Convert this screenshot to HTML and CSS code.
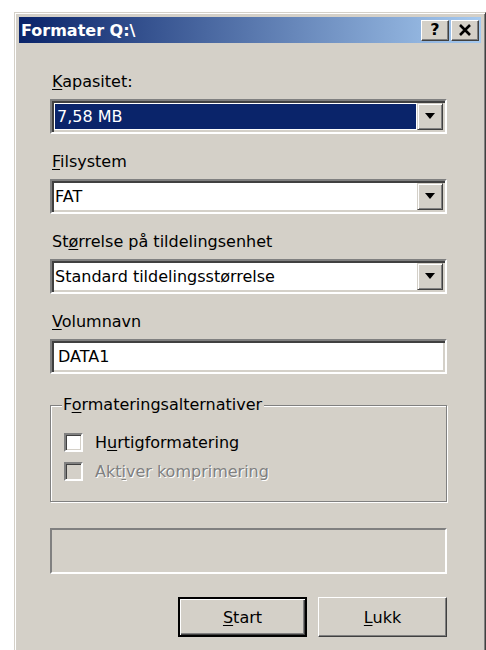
FILE: index.html
```html
<!DOCTYPE html>
<html lang="no">
<head>
<meta charset="utf-8">
<title>Formater Q:\</title>
<link rel="stylesheet" href="styles.css">
</head>
<body>
<div class="window">
  <div class="titlebar">
    <span class="title">Formater Q:\</span>
    <div class="title-buttons">
      <div class="tbtn help">?</div>
      <div class="tbtn close">
        <svg width="14" height="12" viewBox="0 0 14 12"><path d="M2 1 L12 11 M12 1 L2 11" stroke="#000" stroke-width="2.6" fill="none"/></svg>
      </div>
    </div>
  </div>

  <div class="content">
    <label class="label"><u>K</u>apasitet:</label>
    <div class="field combo">
      <div class="combo-value"><span class="selected">7,58 MB</span></div>
      <div class="combo-btn"><svg width="12" height="7" viewBox="0 0 12 7"><path d="M1 0 H11 L6 6 Z" fill="#000"/></svg></div>
    </div>

    <label class="label"><u>F</u>ilsystem</label>
    <div class="field combo">
      <div class="combo-value"><span class="plain">FAT</span></div>
      <div class="combo-btn"><svg width="12" height="7" viewBox="0 0 12 7"><path d="M1 0 H11 L6 6 Z" fill="#000"/></svg></div>
    </div>

    <label class="label">St<u>ø</u>rrelse på tildelingsenhet</label>
    <div class="field combo">
      <div class="combo-value"><span class="plain">Standard tildelingsstørrelse</span></div>
      <div class="combo-btn"><svg width="12" height="7" viewBox="0 0 12 7"><path d="M1 0 H11 L6 6 Z" fill="#000"/></svg></div>
    </div>

    <label class="label"><u>V</u>olumnavn</label>
    <div class="field textbox">DATA1</div>

    <fieldset class="group">
      <legend>F<u>o</u>rmateringsalternativer</legend>
      <div class="check-row">
        <span class="checkbox"></span>
        <span>H<u>u</u>rtigformatering</span>
      </div>
      <div class="check-row disabled">
        <span class="checkbox"></span>
        <span>Akt<u>i</u>ver komprimering</span>
      </div>
    </fieldset>

    <div class="progress"></div>

    <div class="buttons">
      <div class="button default"><span><u>S</u>tart</span></div>
      <div class="button"><span><u>L</u>ukk</span></div>
    </div>
  </div>
</div>
</body>
</html>
```

FILE: styles.css
```css
html, body {
  margin: 0;
  background: #fff;
}

body {
  font-family: "DejaVu Sans", Tahoma, sans-serif;
  font-size: 16px;
  color: #000;
  overflow: hidden;
}

u {
  text-decoration: underline;
  text-underline-offset: 2px;
  text-decoration-thickness: 1px;
}

/* dialog frame */
.window {
  margin: 12px 0 0 14px;
  width: 472px;
  height: 660px;
  box-sizing: border-box;
  background: #d4d0c8;
  border: 1px solid;
  border-color: #d4d0c8 #404040 #404040 #d4d0c8;
  box-shadow: inset 1px 1px #fff, inset -1px -1px #808080;
  padding: 4px;
}

.titlebar {
  height: 26px;
  display: flex;
  align-items: center;
  padding-left: 2px;
  background: linear-gradient(to right, #0a246a, #a6caf0);
}

.title {
  flex: 1;
  color: #fff;
  font-weight: bold;
  font-size: 16px;
  white-space: nowrap;
}

.title-buttons {
  display: flex;
  gap: 2px;
  margin-right: 2px;
}

.tbtn {
  width: 28px;
  height: 21px;
  box-sizing: border-box;
  display: flex;
  align-items: center;
  justify-content: center;
  background: #d4d0c8;
  border: 1px solid;
  border-color: #fff #404040 #404040 #fff;
  box-shadow: inset -1px -1px #808080;
}

.tbtn.help {
  font-weight: bold;
  font-size: 16px;
  line-height: 1;
}

/* dialog body */
.content {
  padding: 27px 34px 0 31px;
}

.label {
  display: block;
  height: 20px;
  line-height: 20px;
  padding-top: 2px;
  margin-left: 2px;
  white-space: nowrap;
}

.field {
  height: 35px;
  box-sizing: border-box;
  margin: 7px 0 16px;
  background: #fff;
  border: 2px solid;
  border-color: #808080 #fff #fff #808080;
  box-shadow: inset 2px 2px #404040, inset -2px -2px #d4d0c8;
  padding: 2px;
}

.combo {
  display: flex;
}

.combo-value {
  flex: 1;
  display: flex;
  padding: 1px;
}

.combo-value span {
  flex: 1;
  display: flex;
  align-items: center;
  white-space: nowrap;
}

.combo-value .selected {
  background: #0a246a;
  color: #fff;
  padding-left: 2px;
}

.combo-value .plain {
  padding-left: 0;
}

.combo-btn {
  width: 26px;
  box-sizing: border-box;
  display: flex;
  align-items: center;
  justify-content: center;
  background: #d4d0c8;
  border: 1px solid;
  border-color: #d4d0c8 #404040 #404040 #d4d0c8;
  box-shadow: inset 1px 1px #fff, inset -1px -1px #808080;
}

.textbox {
  display: flex;
  align-items: center;
  padding-left: 6px;
}

/* options group */
.group {
  margin: 21px 0 0;
  padding: 17px 12px 20px 13px;
  min-width: 0;
  border: 1px solid #808080;
  box-shadow: inset 1px 1px #fff, 1px 1px #fff;
}

.group legend {
  margin-left: -2px;
  padding: 0 2px 0 1px;
  height: 20px;
  line-height: 20px;
  background: #d4d0c8;
}

.check-row {
  display: flex;
  align-items: center;
  gap: 12px;
  height: 20px;
  white-space: nowrap;
}

.check-row + .check-row {
  margin-top: 9px;
}

.checkbox {
  width: 19px;
  height: 19px;
  box-sizing: border-box;
  background: #fff;
  border: 2px solid;
  border-color: #808080 #fff #fff #808080;
  box-shadow: inset 1px 1px #404040, inset -1px -1px #d4d0c8;
}

.check-row.disabled {
  color: #808080;
  text-shadow: 1px 1px #fff;
}

.check-row.disabled .checkbox {
  background: #d4d0c8;
}

/* progress area */
.progress {
  margin-top: 26px;
  height: 46px;
  box-sizing: border-box;
  border: 2px solid;
  border-color: #808080 #fff #fff #808080;
}

/* command buttons */
.buttons {
  display: flex;
  justify-content: flex-end;
  gap: 11px;
  margin-top: 23px;
}

.button {
  width: 129px;
  height: 40px;
  box-sizing: border-box;
  display: flex;
  align-items: center;
  justify-content: center;
  border: 1px solid;
  border-color: #fff #404040 #404040 #fff;
  box-shadow: inset -1px -1px #808080, inset 1px 1px #d4d0c8;
}

.button.default {
  border: 2px solid #000;
  box-shadow: inset 1px 1px #fff, inset -1px -1px #404040, inset -2px -2px #808080;
}
```
